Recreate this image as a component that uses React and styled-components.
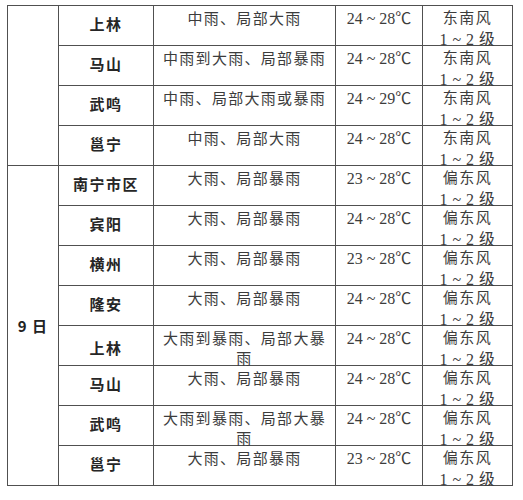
import React from "react";
import styled, { createGlobalStyle } from "styled-components";

const GlobalStyle = createGlobalStyle`
  html, body {
    margin: 0;
    padding: 0;
    background: #fff;
  }
  body {
    font-family: "Noto Sans CJK SC", "Liberation Sans", sans-serif;
    color: #333;
  }
`;

const Page = styled.div`
  padding: 5px 0 0 7px;
`;

const Grid = styled.div`
  display: grid;
  grid-template-columns: 50px 94px 181px 86px 89px;
  grid-auto-rows: 39px;
  gap: 1px;
  padding: 1px;
  background: #505050;
  width: max-content;
`;

const Cell = styled.div`
  background: #fff;
  text-align: center;
  overflow: visible;
  white-space: normal;
`;

const DateCell = styled(Cell)`
  grid-row: span ${({ $span }) => $span};
  display: flex;
  align-items: center;
  justify-content: center;
  font-weight: 700;
  font-size: 15px;
  color: #222;
  letter-spacing: 1px;
`;

const NameCell = styled(Cell)`
  padding-top: ${({ $low }) => ($low ? 11 : 7)}px;
  font-size: 15px;
  line-height: 21px;
  font-weight: 700;
  color: #262626;
  letter-spacing: 1.5px;
`;

const DescCell = styled(Cell)`
  padding: 2px 6px 0;
  font-size: 15px;
  line-height: 20px;
  letter-spacing: 1.3px;
  color: #3c3c3c;
`;

const TempCell = styled(Cell)`
  padding-top: 2px;
  font-family: "Liberation Serif", "Noto Sans CJK SC", serif;
  font-size: 16px;
  line-height: 21px;
  color: #3c3c3c;
`;

const WindCell = styled(Cell)`
  padding-top: 2px;
  font-family: "Liberation Serif", "Noto Sans CJK SC", serif;
  font-size: 16px;
  line-height: 21px;
  color: #3c3c3c;
`;

const WindName = styled.div`
  letter-spacing: 1.5px;
  font-size: 15px;
`;

const Level = styled.div`
  letter-spacing: 0.5px;
`;

const groups = [
  {
    date: "",
    rows: [
      ["上林", "中雨、局部大雨", "24 ~ 28℃", "东南风"],
      ["马山", "中雨到大雨、局部暴雨", "24 ~ 28℃", "东南风"],
      ["武鸣", "中雨、局部大雨或暴雨", "24 ~ 29℃", "东南风"],
      ["邕宁", "中雨、局部大雨", "24 ~ 28℃", "东南风"],
    ],
  },
  {
    date: "9 日",
    rows: [
      ["南宁市区", "大雨、局部暴雨", "23 ~ 28℃", "偏东风"],
      ["宾阳", "大雨、局部暴雨", "24 ~ 28℃", "偏东风"],
      ["横州", "大雨、局部暴雨", "23 ~ 28℃", "偏东风"],
      ["隆安", "大雨、局部暴雨", "24 ~ 28℃", "偏东风"],
      ["上林", "大雨到暴雨、局部大暴雨", "24 ~ 28℃", "偏东风", true],
      ["马山", "大雨、局部暴雨", "24 ~ 28℃", "偏东风"],
      ["武鸣", "大雨到暴雨、局部大暴雨", "24 ~ 28℃", "偏东风"],
      ["邕宁", "大雨、局部暴雨", "23 ~ 28℃", "偏东风"],
    ],
  },
];

const App = () => {
  return (
    <Page>
      <GlobalStyle />
      <Grid>
        {groups.map((g, gi) => (
          <React.Fragment key={gi}>
            <DateCell $span={g.rows.length}>{g.date}</DateCell>
            {g.rows.map(([name, desc, temp, wind, low], ri) => (
              <React.Fragment key={ri}>
                <NameCell $low={low}>{name}</NameCell>
                <DescCell>{desc}</DescCell>
                <TempCell>{temp}</TempCell>
                <WindCell>
                  <WindName>{wind}</WindName>
                  <Level>1 ~ 2 级</Level>
                </WindCell>
              </React.Fragment>
            ))}
          </React.Fragment>
        ))}
      </Grid>
    </Page>
  );
};

export default App;
